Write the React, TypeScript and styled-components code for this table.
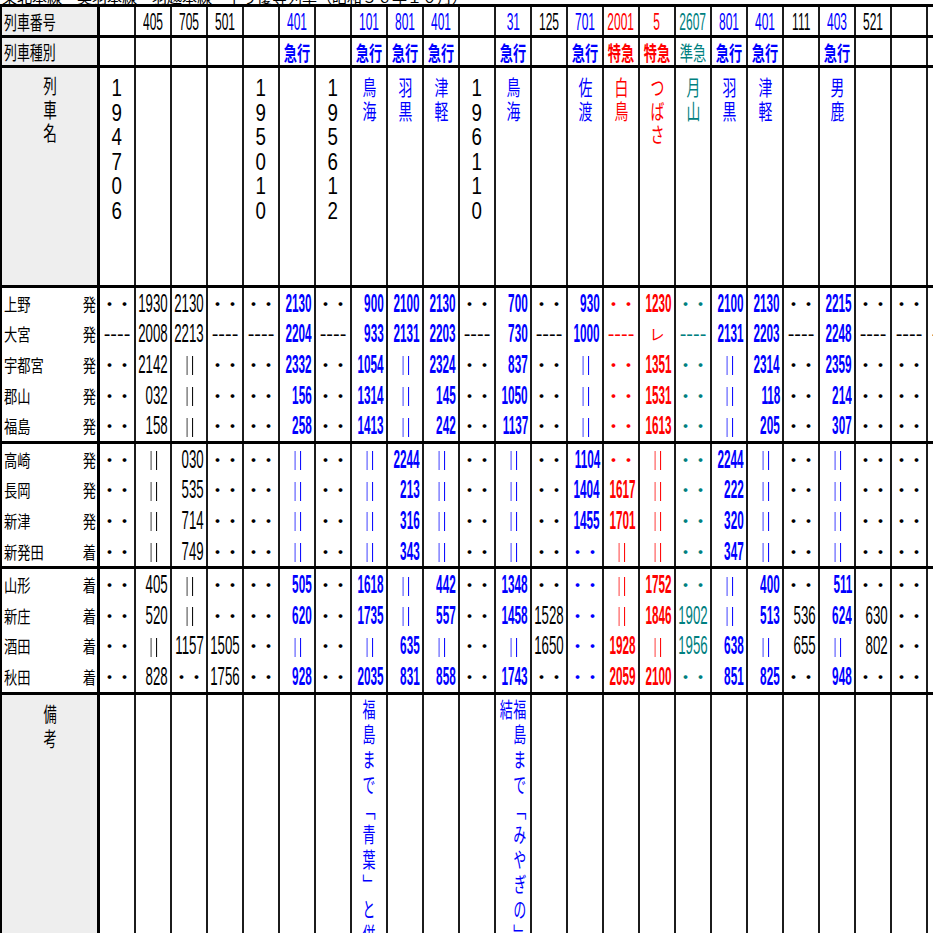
import React from "react";
import styled, { createGlobalStyle } from "styled-components";

const GlobalStyle = createGlobalStyle`
  html, body {
    margin: 0;
    padding: 0;
    background: #ffffff;
    overflow: hidden;
  }
  body {
    font-family: "Noto Sans CJK JP", "Liberation Sans", sans-serif;
    color: #000000;
  }
`;

type Ink = "k" | "b" | "r" | "g";

const INK: Record<Ink, string> = {
  k: "#000000",
  b: "#0000ff",
  r: "#ff0000",
  g: "#008080",
};

type Train = {
  no: string;
  kind?: string;
  name?: string;
  ink: Ink;
  times: string[];
  note?: string;
};

// ".." = not served, "-" = other route, "|" = passes, "v" = passes (レ)
const DOTS = Array(13).fill("..").map((v, i) => (i === 1 ? "-" : v));

const TRAINS: Train[] = [
  { no: "", name: "194706", ink: "k", times: DOTS },
  { no: "405", ink: "k", times: ["1930", "2008", "2142", "032", "158", "|", "|", "|", "|", "405", "520", "|", "828"] },
  { no: "705", ink: "k", times: ["2130", "2213", "|", "|", "|", "030", "535", "714", "749", "|", "|", "1157", ".."] },
  { no: "501", ink: "k", times: ["..", "-", "..", "..", "..", "..", "..", "..", "..", "..", "..", "1505", "1756"] },
  { no: "", name: "195010", ink: "k", times: DOTS },
  { no: "401", kind: "急行", ink: "b", times: ["2130", "2204", "2332", "156", "258", "|", "|", "|", "|", "505", "620", "|", "928"] },
  { no: "", name: "195612", ink: "k", times: DOTS },
  {
    no: "101", kind: "急行", name: "鳥海", ink: "b",
    times: ["900", "933", "1054", "1314", "1413", "|", "|", "|", "|", "1618", "1735", "|", "2035"],
    note: "福島まで「青葉」と併結",
  },
  { no: "801", kind: "急行", name: "羽黒", ink: "b", times: ["2100", "2131", "|", "|", "|", "2244", "213", "316", "343", "|", "|", "635", "831"] },
  { no: "401", kind: "急行", name: "津軽", ink: "b", times: ["2130", "2203", "2324", "145", "242", "|", "|", "|", "|", "442", "557", "|", "858"] },
  { no: "", name: "196110", ink: "k", times: DOTS },
  {
    no: "31", kind: "急行", name: "鳥海", ink: "b",
    times: ["700", "730", "837", "1050", "1137", "|", "|", "|", "|", "1348", "1458", "|", "1743"],
    note: "福島まで「みやぎの」と併\n結",
  },
  { no: "125", ink: "k", times: ["..", "-", "..", "..", "..", "..", "..", "..", "..", "..", "1528", "1650", ".."] },
  { no: "701", kind: "急行", name: "佐渡", ink: "b", times: ["930", "1000", "|", "|", "|", "1104", "1404", "1455", "..", "..", "..", "..", ".."] },
  { no: "2001", kind: "特急", name: "白鳥", ink: "r", times: ["..", "-", "..", "..", "..", "..", "1617", "1701", "|", "|", "|", "1928", "2059"] },
  { no: "5", kind: "特急", name: "つばさ", ink: "r", times: ["1230", "v", "1351", "1531", "1613", "|", "|", "|", "|", "1752", "1846", "|", "2100"] },
  { no: "2607", kind: "準急", name: "月山", ink: "g", times: ["..", "-", "..", "..", "..", "..", "..", "..", "..", "..", "1902", "1956", ".."] },
  { no: "801", kind: "急行", name: "羽黒", ink: "b", times: ["2100", "2131", "|", "|", "|", "2244", "222", "320", "347", "|", "|", "638", "851"] },
  { no: "401", kind: "急行", name: "津軽", ink: "b", times: ["2130", "2203", "2314", "118", "205", "|", "|", "|", "|", "400", "513", "|", "825"] },
  { no: "111", ink: "k", times: ["..", "-", "..", "..", "..", "..", "..", "..", "..", "..", "536", "655", ".."] },
  { no: "403", kind: "急行", name: "男鹿", ink: "b", times: ["2215", "2248", "2359", "214", "307", "|", "|", "|", "|", "511", "624", "|", "948"] },
  { no: "521", ink: "k", times: ["..", "-", "..", "..", "..", "..", "..", "..", "..", "..", "630", "802", ".."] },
  { no: "", ink: "k", times: DOTS },
  { no: "", ink: "k", times: DOTS },
];

const STATIONS: [string, string][] = [
  ["上野", "発"], ["大宮", "発"], ["宇都宮", "発"], ["郡山", "発"], ["福島", "発"],
  ["高崎", "発"], ["長岡", "発"], ["新津", "発"], ["新発田", "着"],
  ["山形", "着"], ["新庄", "着"], ["酒田", "着"], ["秋田", "着"],
];

const BLOCK_STARTS = [0, 5, 9];

const Sheet = styled.div`
  width: 964px;
`;

const Caption = styled.div`
  height: 4px;
  overflow: hidden;
  display: flex;
  align-items: flex-end;
  padding-left: 2px;
  font-size: 15px;
  line-height: 15px;
  white-space: nowrap;
`;

const Row = styled.div<{ $h: number; $thick?: boolean }>`
  display: grid;
  grid-template-columns: 100px repeat(24, 36px);
  height: ${(p) => p.$h}px;
  border-top: ${(p) => (p.$thick ? "3px solid #000" : "0")};
`;

const Label = styled.div<{ $stack?: boolean; $white?: boolean }>`
  box-sizing: border-box;
  background: ${(p) => (p.$white ? "#ffffff" : "#eeeeee")};
  border-left: 2px solid #000;
  border-right: 3px solid #000;
  display: flex;
  align-items: ${(p) => (p.$stack ? "flex-start" : "center")};
  justify-content: ${(p) => (p.$stack ? "center" : "space-between")};
  padding: ${(p) => (p.$stack ? "6px 0 0" : "0 1px 0 2px")};
  overflow: hidden;
`;

const Cell = styled.div<{ $justify?: string; $align?: string; $padTop?: number }>`
  box-sizing: border-box;
  border-right: 2px solid #1c1c1c;
  display: flex;
  justify-content: ${(p) => p.$justify ?? "center"};
  align-items: ${(p) => p.$align ?? "center"};
  padding-right: ${(p) => (p.$justify === "flex-end" ? 2 : 0)}px;
  padding-top: ${(p) => p.$padTop ?? 0}px;
  min-width: 0;
`;

const Squeeze = styled.span<{ $size: number; $sx: number; $origin?: string; $bold?: boolean }>`
  display: inline-block;
  font-size: ${(p) => p.$size}px;
  line-height: 1;
  font-weight: ${(p) => (p.$bold ? 700 : 400)};
  white-space: nowrap;
  transform: scaleX(${(p) => p.$sx});
  transform-origin: ${(p) => p.$origin ?? "center"} center;
`;

const Stack = styled.span<{ $size: number; $lh: number; $sx: number; $color?: string; $latin?: boolean }>`
  display: inline-block;
  font-family: ${(p) => (p.$latin ? `"Liberation Sans", Arial, sans-serif` : `"Noto Sans CJK JP", sans-serif`)};
  font-size: ${(p) => p.$size}px;
  line-height: ${(p) => p.$lh}px;
  color: ${(p) => p.$color ?? "#000"};
  white-space: pre-line;
  text-align: center;
  transform: scaleX(${(p) => p.$sx});
  transform-origin: center top;
`;

const Figure = styled.span<{ $color: string; $bold?: boolean; $sx: number; $size: number; $origin: string }>`
  display: inline-block;
  font-family: "Liberation Sans", Arial, sans-serif;
  font-size: ${(p) => p.$size}px;
  line-height: 1;
  font-weight: ${(p) => (p.$bold ? 700 : 400)};
  color: ${(p) => p.$color};
  white-space: nowrap;
  transform: scaleX(${(p) => p.$sx});
  transform-origin: ${(p) => p.$origin} center;
`;

const Dots = styled.span<{ $color: string }>`
  font-family: "Noto Sans CJK JP", sans-serif;
  font-size: 15px;
  font-weight: 700;
  line-height: 1;
  color: ${(p) => p.$color};
  white-space: nowrap;
`;

const Dash = styled.span<{ $color: string }>`
  font-family: "Liberation Sans", Arial, sans-serif;
  font-size: 20px;
  line-height: 1;
  color: ${(p) => p.$color};
  white-space: nowrap;
`;

const Pipes = styled.span<{ $color: string }>`
  display: inline-block;
  font-family: "Liberation Sans", Arial, sans-serif;
  font-size: 20px;
  line-height: 1;
  letter-spacing: 5px;
  margin-right: -5px;
  color: ${(p) => p.$color};
  white-space: nowrap;
  transform: scaleX(0.55);
  transform-origin: center center;
  will-change: transform;
`;

const Kana = styled.span<{ $color: string }>`
  font-family: "Noto Sans CJK JP", sans-serif;
  font-size: 15px;
  line-height: 1;
  color: ${(p) => p.$color};
`;

const Note = styled.span`
  display: inline-block;
  writing-mode: vertical-rl;
  font-family: "Noto Sans CJK JP", sans-serif;
  font-size: 21px;
  line-height: 22px;
  letter-spacing: 4px;
  color: #0000ff;
  white-space: pre;
  transform: scaleX(0.62);
  transform-origin: center top;
`;

function TimeCell({ v, t }: { v: string; t: Train }) {
  const color = INK[t.ink];
  if (v === "..") {
    return (
      <Cell>
        <Dots $color={color}>・・</Dots>
      </Cell>
    );
  }
  if (v === "-") {
    return (
      <Cell>
        <Dash $color={color}>----</Dash>
      </Cell>
    );
  }
  if (v === "|") {
    return (
      <Cell>
        <Pipes $color={color}>||</Pipes>
      </Cell>
    );
  }
  if (v === "v") {
    return (
      <Cell>
        <Kana $color={color}>レ</Kana>
      </Cell>
    );
  }
  const bold = t.ink === "b" || t.ink === "r";
  return (
    <Cell $justify="flex-end">
      <Figure $color={color} $bold={bold} $sx={bold ? 0.47 : 0.53} $size={25} $origin="right">
        {v}
      </Figure>
    </Cell>
  );
}

function NameCell({ t }: { t: Train }) {
  if (!t.name) return <Cell />;
  const digits = /^\d+$/.test(t.name);
  return (
    <Cell $align="flex-start" $padTop={digits ? 8 : 7}>
      <Stack
        $size={digits ? 24 : 21}
        $lh={digits ? 24.5 : 23.5}
        $sx={digits ? 0.78 : 0.66}
        $color={INK[t.ink]}
        $latin={digits}
      >
        {t.name.split("").join("\n")}
      </Stack>
    </Cell>
  );
}

export default function App() {
  return (
    <>
      <GlobalStyle />
      <Sheet>
        <Caption>東北本線・奥羽本線・羽越本線　下り優等列車（昭和３６年１０月）</Caption>

        <Row $h={28} $thick>
          <Label>
            <Squeeze $size={19} $sx={0.68} $origin="left">列車番号</Squeeze>
          </Label>
          {TRAINS.map((t, i) => (
            <Cell key={i} $padTop={2}>
              <Figure $color={INK[t.ink]} $sx={0.5} $size={24} $origin="center">
                {t.no}
              </Figure>
            </Cell>
          ))}
        </Row>

        <Row $h={27} $thick>
          <Label>
            <Squeeze $size={19} $sx={0.68} $origin="left">列車種別</Squeeze>
          </Label>
          {TRAINS.map((t, i) => (
            <Cell key={i} $padTop={3}>
              {t.kind && (
                <Squeeze
                  $size={20}
                  $sx={0.66}
                  $bold={t.kind !== "準急"}
                  style={{ color: INK[t.ink] }}
                >
                  {t.kind}
                </Squeeze>
              )}
            </Cell>
          ))}
        </Row>

        <Row $h={217} $thick>
          <Label $stack>
            <Stack $size={20} $lh={23.5} $sx={0.68}>
              {"列\n車\n名"}
            </Stack>
          </Label>
          {TRAINS.map((t, i) => (
            <NameCell key={i} t={t} />
          ))}
        </Row>

        {STATIONS.map(([name, dir], s) => (
          <Row key={name} $h={30.6} $thick={BLOCK_STARTS.includes(s)}>
            <Label $white>
              <Squeeze $size={17} $sx={0.78} $origin="left">{name}</Squeeze>
              <Squeeze $size={17} $sx={0.78} $origin="right">{dir}</Squeeze>
            </Label>
            {TRAINS.map((t, i) => (
              <TimeCell key={i} v={t.times[s]} t={t} />
            ))}
          </Row>
        ))}

        <Row $h={300} $thick>
          <Label $stack>
            <Stack $size={20} $lh={25} $sx={0.66}>
              {"備\n考"}
            </Stack>
          </Label>
          {TRAINS.map((t, i) => (
            <Cell key={i} $align="flex-start" $padTop={4}>
              {t.note && <Note>{t.note}</Note>}
            </Cell>
          ))}
        </Row>
      </Sheet>
    </>
  );
}
